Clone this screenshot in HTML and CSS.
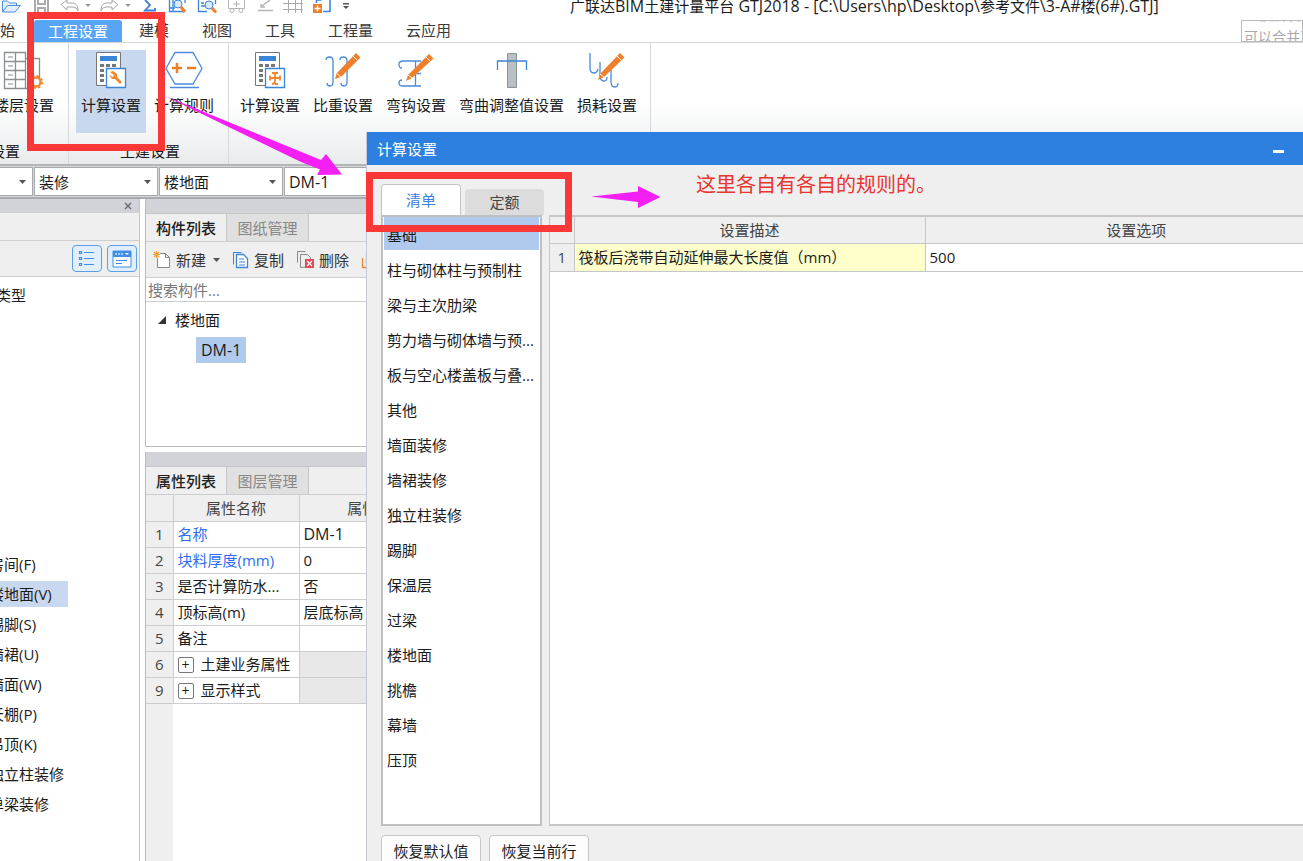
FILE: index.html
```html
<!DOCTYPE html>
<html lang="zh-CN">
<head>
<meta charset="utf-8">
<title>广联达BIM土建计量平台 GTJ2018</title>
<link rel="stylesheet" href="styles.css">
</head>
<body>
<div class="app">
  <header class="titlebar">
    <div class="quick">
      <button aria-label="打开"><svg width="34" height="19" viewBox="0 0 34 19"><path d="M2.500 12V1h5l2 2h7v2M2.500 12l5-6.500h13L15 12z" fill="#e4effb" stroke="#4a8ede"/></svg></button>
      <button aria-label="保存"><svg width="26" height="19" viewBox="34 0 26 19"><path d="M35 0v13h13V0M38 13V8h7v5M38 0v4h7V0" fill="none" stroke="#aaa" stroke-width="2"/></svg></button>
      <button aria-label="撤销"><svg width="24" height="19" viewBox="60 0 24 19"><path d="M61 4.500L67 0v3h5c5 0 6 4 6 8-1-3-3-4-6-4h-5v3z" fill="#fff" stroke="#a5a5a5"/></svg></button>
      <button aria-label="撤销列表"><svg width="14" height="19" viewBox="84 0 14 19"><path d="M85 4h6l-3 3z" fill="#999"/></svg></button>
      <button aria-label="重做"><svg width="24" height="19" viewBox="98 0 24 19"><path d="M118 4.500L112 0v3h-5c-5 0-6 4-6 8 1-3 3-4 6-4h5v3z" fill="#fff" stroke="#a5a5a5"/></svg></button>
      <button aria-label="重做列表"><svg width="20" height="19" viewBox="122 0 20 19"><path d="M125 4h6l-3 3z" fill="#999"/></svg></button>
      <button aria-label="汇总"><svg width="24" height="19" viewBox="142 0 24 19"><path d="M145 0l5 5-5 5.500h10V8" fill="none" stroke="#3d7fd0" stroke-width="1.800"/></svg></button>
      <button aria-label="查看"><svg width="30" height="19" viewBox="166 0 30 19"><path d="M169.500 0v11.500H184M169 8h6M173 0v11M185 0v3" fill="none" stroke="#3d85dc" stroke-width="1.300"/><circle cx="178" cy="4" r="4" fill="#d9eafb" stroke="#3d85dc"/><path d="M181 7l4 5" stroke="#f08030" stroke-width="3"/></svg></button>
      <button aria-label="查找"><svg width="30" height="19" viewBox="196 0 30 19"><path d="M215.500 0v4M198.500 0v11.500H207M201 3h3M201 6h4" fill="none" stroke="#3d85dc" stroke-width="1.300"/><circle cx="209" cy="5" r="4" fill="#d9eafb" stroke="#3d85dc"/><path d="M212 8l4 4.500" stroke="#f08030" stroke-width="3"/></svg></button>
      <button aria-label="添加"><svg width="30" height="19" viewBox="226 0 30 19"><path d="M228.500 0v8.500h16V0M236.500 1v6M233 4h7" fill="none" stroke="#b5b5b5"/><circle cx="232" cy="10.500" r="2" fill="#fff" stroke="#b5b5b5"/><circle cx="241" cy="10.500" r="2" fill="#fff" stroke="#b5b5b5"/></svg></button>
      <button aria-label="编辑"><svg width="26" height="19" viewBox="256 0 26 19"><path d="M258 10.500h15M262 6l8-6M261 4v3h4" fill="none" stroke="#b5b5b5" stroke-width="1.500"/></svg></button>
      <button aria-label="表格"><svg width="30" height="19" viewBox="282 0 30 19"><path d="M283 3.500h20M283 9.500h20M288.500 0v13M295.500 0v13M301.500 0v13" fill="none" stroke="#aaa"/></svg></button>
      <button aria-label="新窗口"><svg width="30" height="19" viewBox="312 0 30 19"><path d="M323 11.500h7V0M316.500 3V0h5" fill="none" stroke="#3d85dc" stroke-width="1.600"/><path d="M313 4h9v9h-9z" fill="#ee7d2b"/><path d="M317.500 5.500v6M314.500 8.500h6" stroke="#fff" stroke-width="1.500"/></svg></button>
      <button aria-label="自定义"><svg width="14" height="19" viewBox="342 0 14 19"><path d="M343 3h6v1.500h-6zM343 6h6l-3 3z" fill="#555"/></svg></button>
    </div>
    <h1>广联达<span class="latin">BIM</span>土建计量平台<span class="latin"> GTJ2018 - [C:\Users\hp\Desktop\</span>参考文件<span class="latin">\3-A#</span>楼<span class="latin">(6#).GTJ]</span></h1>
  </header>

  <nav class="menu">
    <button class="start">开始</button>
    <button class="active">工程设置</button>
    <button>建模</button>
    <button>视图</button>
    <button>工具</button>
    <button>工程量</button>
    <button>云应用</button>
    <div class="notice"><p>主楼层块<br>可以合并了</p></div>
  </nav>

  <section class="ribbon">
    <div class="group first">
      <div class="tools">
        <button><svg width="50" height="40" viewBox="0 50 50 40"><path d="M5.500 52.500h21v36h-21zM5.500 61.500h21M5.500 70.500h21M5.500 79.500h21M16.500 52.500v36M26.500 58.500h14v20M26.500 88.500h5" fill="none" stroke="#8a8f94" stroke-width="1.300"/><path d="M9 57h5M9 66h5M9 75h5M9 84h5" stroke="#888"/><circle cx="37" cy="82" r="4.500" fill="#fff" stroke="#ee8a35" stroke-width="2.500"/><circle cx="37" cy="82" r="6" fill="none" stroke="#ee8a35" stroke-width="2" stroke-dasharray="2.400 2.300"/></svg><span>楼层设置</span></button>
      </div>
      <h2>设置</h2>
    </div>
    <div class="group second">
      <div class="tools">
        <button class="pressed"><svg width="34" height="40" viewBox="94 50 34 40"><path d="M96.500 52.500h24v33h-24z" fill="#fff" stroke="#777"/><path d="M100 56h17v5h-17z" fill="#3c84d6"/><path d="M100 65.500h17M100 70.500h17M100 75.500h17M100 80.500h17" stroke="#777" stroke-width="3" stroke-dasharray="4 2"/><path d="M106.500 68.500h19v19h-19z" fill="#fff" stroke="#3c84d6" stroke-width="1.300"/><path d="M110 72l3-1 4 3v3l5 5-2 2-5-5h-3l-3-4 4 2 1-2z" fill="#f0872f"/></svg><span>计算设置</span></button>
        <button><svg width="38" height="40" viewBox="165 50 38 40"><path d="M175 52.500h18l9 16-9 15.500h-18l-9-15.500zM170 87.500h29" fill="none" stroke="#4a8bdc" stroke-width="1.300"/><path d="M172 68h10M177 63v10M187 68h9" stroke="#f07e26" stroke-width="2.500"/></svg><span>计算规则</span></button>
      </div>
      <h2>土建设置</h2>
    </div>
    <div class="group third">
      <div class="tools">
        <button><svg width="34" height="40" viewBox="254 50 34 40"><path d="M256.500 52.500h24v33h-24z" fill="#fff" stroke="#777"/><path d="M260 56h17v5h-17z" fill="#3c84d6"/><path d="M260 65.500h17M260 70.500h17M260 75.500h17M260 80.500h17" stroke="#777" stroke-width="3" stroke-dasharray="4 2"/><path d="M266.500 68.500h19v19h-19z" fill="#fff" stroke="#3c84d6" stroke-width="1.300"/><path d="M271 78h10M271 75.500v5M281 75.500v5M276 73v8q0 3-3 3M273 73h6M276 84h3" fill="none" stroke="#f0872f" stroke-width="1.800"/></svg><span>计算设置</span></button>
        <button><svg width="38" height="40" viewBox="324 50 38 40"><path d="M326 60q0-3 3.500-3t3.500 4v21q0 4-3 4t-3-3M340 60q0-3 3.500-3t3.500 4v21q0 4-3 4t-3-3" fill="none" stroke="#4a8bdc" stroke-width="1.300"/><path d="M335 79l1.500-5.500L356 53l4.500 4.500L341 77z" fill="#ef7f2b"/><path d="M353 56l4.500 4.500M336.500 73.500L341 77" stroke="#fff"/></svg><span>比重设置</span></button>
        <button><svg width="38" height="40" viewBox="397 50 38 40"><path d="M402 68q-3 0-3-3.500t4-3.500h18M402 80q-3 0-3 3t4 3h18M415.500 61v25M411 73.500h10" fill="none" stroke="#4a8bdc" stroke-width="1.300"/><path d="M406 81l2-6L429 54l4.500 4.500L412 78z" fill="#ef7f2b"/><path d="M426 57l4.500 4.500M408 75l4 3" stroke="#fff"/></svg><span>弯钩设置</span></button>
        <button><svg width="34" height="40" viewBox="494 50 34 40"><path d="M506.500 53.500h9v34h-9z" fill="#b9c0c4" stroke="#8c9397"/><path d="M496.500 70v-9h29v9" fill="none" stroke="#3c84d6" stroke-width="1.300"/></svg><span>弯曲调整值设置</span></button>
        <button><svg width="38" height="40" viewBox="587 50 38 40"><path d="M589 53v15q0 5 4 5 3 0 4-4M599 62v13q0 6 4 6 3 0 3-4M610 70v12q0 5 4 5 3 0 3-4" fill="none" stroke="#4a8bdc" stroke-width="1.300"/><path d="M597 80l2-6L619 53l4.500 4.500L603 77z" fill="#ef7f2b"/><path d="M616 56l4.500 4.500M599 74l4 3" stroke="#fff"/></svg><span>损耗设置</span></button>
      </div>
    </div>
  </section>

  <div class="selectors">
    <label><select aria-label="楼层"><option></option></select><svg width="7" height="4" viewBox="0 0 7 4"><path d="M0 0h7L3.500 4z"/></svg></label>
    <label><select aria-label="类别"><option>装修</option></select><svg width="7" height="4" viewBox="0 0 7 4"><path d="M0 0h7L3.500 4z"/></svg></label>
    <label><select aria-label="构件类型"><option>楼地面</option></select><svg width="7" height="4" viewBox="0 0 7 4"><path d="M0 0h7L3.500 4z"/></svg></label>
    <label><select class="latin" aria-label="构件"><option>DM-1</option></select></label>
  </div>

  <main class="workspace">
    <aside class="nav-panel">
      <div class="dock"><button aria-label="关闭"><svg width="8" height="8" viewBox="0 0 8 8"><path d="M1 1l6 6M7 1L1 7" stroke="#666" stroke-width="1.400"/></svg></button></div>
      <div class="nav-head"></div>
      <div class="nav-views">
        <button aria-label="列表"><svg width="18" height="18" viewBox="0 0 18 18"><path d="M1.500 1.500h2v2h-2zM1.500 7.500h2v2h-2zM1.500 13.500h2v2h-2zM6 2.500h10M6 8.500h10M6 14.500h10" fill="none" stroke="#3f8fe8" stroke-width="1.200"/></svg></button>
        <button aria-label="窗口"><svg width="20" height="18" viewBox="0 0 20 18"><path d="M1 1h18v16H1z" fill="#fff" stroke="#3f8fe8"/><path d="M1 1h18v6H1z" fill="#3f8fe8"/><path d="M4 3v2M7 3v2M10 3v2" stroke="#fff"/><path d="M13 3h4l-2 2z" fill="#fff"/><path d="M4 10.500h11M4 13.500h6" stroke="#3f8fe8"/></svg></button>
      </div>
      <div class="nav-list">
        <h3>类型</h3>
        <ul>
          <li>房间(F)</li>
          <li class="selected">楼地面(V)</li>
          <li>踢脚(S)</li>
          <li>墙裙(U)</li>
          <li>墙面(W)</li>
          <li>天棚(P)</li>
          <li>吊顶(K)</li>
          <li>独立柱装修</li>
          <li>单梁装修</li>
        </ul>
      </div>
    </aside>

    <div class="docks">
      <section class="components">
        <div class="dock"></div>
        <div class="tabs"><button class="current">构件列表</button><button>图纸管理</button></div>
        <div class="toolbar">
          <button><svg width="19" height="20" viewBox="0 0 19 20"><path d="M4.500 3.500h8l4 4v10h-12zM12.500 3.500v4h4" fill="#fff" stroke="#888"/><path d="M0 1h7v7H0z" fill="#efefef"/><path d="M3.500 1v7M0 4.500h7M1 2l5 5M6 2L1 7" stroke="#f0a040" stroke-width="1.200"/></svg>新建<svg class="caret" width="7" height="4" viewBox="0 0 7 4"><path d="M0 0h7L3.500 4z"/></svg></button>
          <button><svg width="18" height="20" viewBox="0 0 18 20"><path d="M1.500 14.500v-12h8" fill="none" stroke="#3c84d6"/><path d="M4.500 4.500h7l4 4v9h-11z" fill="#fff" stroke="#3c84d6" stroke-width="1.300"/><path d="M7 9h5M7 12h6M7 15h6" stroke="#3c84d6"/></svg>复制</button>
          <button><svg width="19" height="20" viewBox="0 0 19 20"><path d="M1.500 12.500v-11h8M4.500 17.500v-13h7l3 3v9z" fill="none" stroke="#888"/><path d="M9 9h9v9H9z" fill="#dc4a55"/><path d="M11 11l5 5M16 11l-5 5" stroke="#fff" stroke-width="1.300"/></svg>删除</button>
          <button aria-label="层间复制"><svg width="16" height="20" viewBox="0 0 16 20"><path d="M1.500 8v9.500h12V8M5.500 14V4h8" fill="none" stroke="#ee8a35" stroke-width="1.300"/></svg></button>
        </div>
        <input class="search" type="text" placeholder="搜索构件..." aria-label="搜索构件">
        <div class="tree">
          <div class="node"><svg width="8" height="8" viewBox="0 0 8 8"><path d="M8 0v8H0z" fill="#333"/></svg>楼地面</div>
          <div class="leaf"><span class="latin">DM-1</span></div>
        </div>
      </section>
      <section class="properties">
        <div class="dock"></div>
        <div class="tabs"><button class="current">属性列表</button><button>图层管理</button></div>
        <div class="prop-body">
          <table>
            <thead><tr><th class="idx"></th><th class="name">属性名称</th><th class="val">属性值</th></tr></thead>
            <tbody>
              <tr><th>1</th><td class="key">名称</td><td class="latin">DM-1</td></tr>
              <tr><th>2</th><td class="key">块料厚度(mm)</td><td>0</td></tr>
              <tr><th>3</th><td>是否计算防水...</td><td>否</td></tr>
              <tr><th>4</th><td>顶标高(m)</td><td>层底标高</td></tr>
              <tr><th>5</th><td>备注</td><td></td></tr>
              <tr><th>6</th><td><button class="expand" aria-label="展开">+</button>土建业务属性</td><td class="off"></td></tr>
              <tr><th>9</th><td><button class="expand" aria-label="展开">+</button>显示样式</td><td class="off"></td></tr>
            </tbody>
          </table>
          <div class="gutter"></div>
        </div>
      </section>
    </div>
  </main>
</div>

<div class="dialog" role="dialog" aria-labelledby="dlg-title">
  <div class="dlg-title"><h2 id="dlg-title">计算设置</h2><button aria-label="最小化"><svg width="11" height="3" viewBox="0 0 11 3"><path d="M0 0h11v3H0z" fill="#fff"/></svg></button></div>
  <div class="dlg-tabs"><button class="current">清单</button><button>定额</button></div>
  <div class="dlg-main">
    <ul class="categories">
      <li class="selected">基础</li>
      <li>柱与砌体柱与预制柱</li>
      <li>梁与主次肋梁</li>
      <li>剪力墙与砌体墙与预...</li>
      <li>板与空心楼盖板与叠...</li>
      <li>其他</li>
      <li>墙面装修</li>
      <li>墙裙装修</li>
      <li>独立柱装修</li>
      <li>踢脚</li>
      <li>保温层</li>
      <li>过梁</li>
      <li>楼地面</li>
      <li>挑檐</li>
      <li>幕墙</li>
      <li>压顶</li>
    </ul>
    <div class="settings">
      <table>
        <thead><tr><th class="num"></th><th class="desc">设置描述</th><th class="opt">设置选项</th></tr></thead>
        <tbody><tr><th>1</th><td class="hint">筏板后浇带自动延伸最大长度值（mm）</td><td>500</td></tr></tbody>
      </table>
    </div>
  </div>
  <div class="dlg-foot"><button>恢复默认值</button><button>恢复当前行</button></div>
</div>

<div class="mark mark-ribbon"></div>
<div class="mark mark-tabs"></div>
<svg class="arrow arrow-ribbon" width="180" height="84" viewBox="164 94 180 84"><path d="M164 95.500L321 160l5-6 16 20.500-25 .5 3-5.500-20-8z" fill="#f31ff3"/></svg>
<svg class="arrow arrow-tabs" width="72" height="24" viewBox="590 185 72 24"><path d="M591 196.500l47-5v-5.500l22.500 11-22.500 11v-6z" fill="#f31ff3"/></svg>
<p class="note">这里各自有各自的规则的。</p>
</body>
</html>
```

FILE: styles.css
```css
* { box-sizing: border-box; }
html, body { height: 100%; margin: 0; }
body {
  position: relative;
  overflow: hidden;
  background: #fff;
  color: #1c1c1c;
  font: 15px/20px "Open Sans", "Noto Sans CJK SC", sans-serif;
}
h1, h2, h3, p, ul { margin: 0; padding: 0; font-size: 15px; font-weight: 400; list-style: none; }
button, input, select { margin: 0; padding: 0; border: 0; background: none; color: inherit; font: inherit; white-space: nowrap; }
svg { display: block; flex: none; }
table { border-collapse: collapse; table-layout: fixed; }
th { font-weight: 400; color: #444; }
.latin { font-size: 16px; }

/* The window runs off the left edge of the screen */
.app { display: flex; flex-direction: column; height: 100%; margin-left: -16px; }

.titlebar { display: flex; height: 19px; flex: none; }
.quick { display: flex; width: 570px; padding-left: 16px; }
.titlebar h1 { margin-left: 16px; line-height: 12px; white-space: nowrap; }

.menu { display: flex; flex: none; gap: 1px; height: 24px; border-bottom: 1px solid #d5d7d9; color: #3a3a3a; }
.menu button { padding: 0 16px; line-height: 23px; }
.menu .start { width: 49px; padding: 0 1px; text-align: left; }
.menu .active { padding: 0 14px; margin-top: 1px; border-radius: 3px 3px 0 0; background: #58a5f5; color: #fff; line-height: 21px; }
.notice { width: 62px; height: 22px; margin: 1px 0 0 auto; overflow: hidden; border: 1px solid #bbb; color: #aaa; }
.notice p { margin: -17px 0 0 2px; font-size: 14px; line-height: 22px; white-space: nowrap; }

.ribbon { display: flex; flex: none; height: 123px; border-bottom: 2px solid #b3b5b9; background: linear-gradient(#fff 50%, #e8ebec); }
.group { display: flex; flex-direction: column; padding-top: 7px; border-right: 1px solid #d6d9dc; }
.tools { display: flex; gap: 3px; }
.tools button { display: flex; flex-direction: column; align-items: center; height: 83px; padding: 0 5px; }
.tools span { line-height: 30px; }
.tools .pressed { background: #c8d8ee; }
.group h2 { margin-top: 8px; text-align: center; }
.first { width: 85px; padding-left: 5px; }
.first h2 { text-align: left; padding-left: 1px; }
.second { width: 160px; padding-left: 7px; }
.second h2 { padding-right: 4px; }
.third { width: 422px; padding-left: 6px; }

.selectors { display: flex; flex: none; gap: 1px; height: 33px; padding: 1px 0; border-bottom: 2px solid #a8aaae; background: #d8d9dc; }
.selectors label { display: flex; align-items: center; width: 124px; padding-right: 6px; border: 1px solid #a5a7aa; background: #fff; }
.selectors label:first-child { width: 49px; }
.selectors select { flex: 1; min-width: 0; height: 28px; padding-left: 4px; appearance: none; outline: 0; }
.selectors .latin { font-size: 16px; }
.selectors path, .caret path { fill: #555; }

.workspace { display: flex; flex: 1; min-height: 0; }
.dock { display: flex; flex: none; align-items: center; justify-content: flex-end; height: 14px; padding-right: 7px; background: #d2d3d9; }
.nav-panel { display: flex; flex: none; flex-direction: column; width: 156px; border-right: 1px solid #c3c5c9; }
.nav-head { height: 28px; background: #efefef; border-bottom: 1px solid #cfcfcf; }
.nav-views { display: flex; justify-content: flex-end; gap: 5px; height: 36px; padding: 4px 2px; background: #efefef; border-bottom: 1px solid #cfcfcf; }
.nav-views button { display: flex; align-items: center; justify-content: center; width: 30px; height: 27px; border: 1px solid #5a9fe8; border-radius: 4px; background: #e1effc; }
.nav-list { flex: 1; padding: 8px 0 0 5px; }
.nav-list h3 { padding-left: 7px; }
.nav-list ul { display: flex; flex-direction: column; gap: 4px; margin-top: 246px; }
.nav-list li { width: 79px; line-height: 26px; white-space: nowrap; }
.nav-list .selected { background: #c8d8ee; }

.docks { display: flex; flex: none; flex-direction: column; width: 296px; margin-left: 5px; }
.components { display: flex; flex: none; flex-direction: column; height: 248px; border: 1px solid #b8babd; border-top: 0; }
.tabs { display: flex; flex: none; height: 29px; border-top: 1px solid #c4c6c9; border-bottom: 1px solid #cbcdd0; background: #efefef; }
.tabs button { width: 82px; border-right: 1px solid #c4c6c9; background: #e0e0e0; color: #888; }
.tabs .current { width: 81px; background: #efefef; color: #222; font-weight: 500; }
.toolbar { display: flex; flex: none; gap: 12px; height: 36px; padding-left: 7px; background: #efefef; border-bottom: 1px solid #cbcdd0; color: #333; }
.toolbar button { display: flex; align-items: center; gap: 4px; }
.toolbar .caret { margin-left: 3px; }
.search { flex: none; height: 24px; padding: 0 2px; border-bottom: 1px solid #cbcdd0; outline: 0; }
.search::placeholder { color: #777; opacity: 1; }
.tree { padding: 3px 0 0 12px; line-height: 30px; }
.node { display: flex; align-items: center; gap: 9px; }
.leaf { display: flex; align-items: center; height: 30px; padding-left: 38px; }
.leaf span { padding: 0 5px; background: #b0caee; line-height: 26px; }
.properties { display: flex; flex: 1; flex-direction: column; margin-top: 5px; border-left: 1px solid #b8babd; min-height: 0; }
.prop-body { display: flex; flex: 1; flex-direction: column; }
.prop-body table { width: 295px; }
.prop-body tr { height: 26px; }
.prop-body th, .prop-body td { padding: 0 4px; border-right: 1px solid #cbcdd0; border-bottom: 1px solid #cbcdd0; background: #fff; line-height: 20px; white-space: nowrap; }
.prop-body th { background: #efefef; }
.prop-body .idx { width: 27px; }
.prop-body .name { width: 126px; }
.prop-body .key { color: #2f6df0; }
.prop-body .off { background: #e8e8e8; }
.expand { width: 16px; height: 16px; margin-right: 7px; border: 1px solid #777; border-radius: 2px; font-size: 14px; line-height: 12px; }
.gutter { flex: 1; width: 27px; background: #efefef; }

/* Calculation settings dialog */
.dialog { position: absolute; inset: 132px 0 0 366px; display: flex; flex-direction: column; overflow: hidden; border-left: 1px solid #c3c8d4; background: #efefef; }
.dlg-title { display: flex; flex: none; align-items: center; justify-content: space-between; height: 33px; margin-left: -1px; padding: 0 19px 0 11px; background: #2d7fe0; color: #fff; }
.dlg-title button { padding-top: 6px; }
.dlg-tabs { display: flex; flex: none; align-items: flex-end; gap: 4px; height: 50px; padding-left: 14px; }
.dlg-tabs button { width: 79px; height: 26px; border-radius: 4px 4px 0 0; background: #dcdcdc; color: #444; }
.dlg-tabs .current { width: 80px; height: 31px; border: 1px solid #c4c4c4; border-bottom: 0; background: #fff; color: #3b82e0; }
.dlg-main { display: flex; flex: 1; gap: 7px; min-height: 0; padding-left: 14px; }
.categories { flex: none; width: 161px; border: 2px solid #bfc0c2; background: #fff; overflow: hidden; }
.categories li { height: 35px; padding-left: 4px; line-height: 36px; white-space: nowrap; border-bottom: 2px solid #fff; }
.categories .selected { margin: 0 1px; padding-left: 3px; background: #b0caee; }
.settings { flex: 1; overflow: hidden; border: 2px solid #c6c6c6; border-width: 2px 0 2px 1px; background: #fff; }
.settings table { width: 798px; }
.settings th, .settings td { height: 28px; padding: 0 4px; border-right: 1px solid #c4c6c9; border-bottom: 1px solid #c4c6c9; white-space: nowrap; }
.settings thead th { height: 26px; }
.settings th { background: #efefef; }
.settings .num { width: 24px; }
.settings .desc { width: 351px; }
.settings .hint { background: #ffffcb; }
.dlg-foot { display: flex; flex: none; gap: 8px; height: 35px; padding: 9px 0 0 14px; }
.dlg-foot button { flex: none; width: 100px; height: 32px; border: 1px solid #c6c6c6; border-radius: 4px; background: #fdfdfd; }

/* Callouts drawn over the window */
.mark { position: absolute; border: 7px solid #fb3838; }
.mark-ribbon { left: 27px; top: 12px; width: 138px; height: 139px; }
.mark-tabs { left: 366px; top: 172px; width: 206px; height: 60px; }
.arrow { position: absolute; }
.arrow-ribbon { left: 164px; top: 94px; }
.arrow-tabs { left: 590px; top: 185px; }
.note { position: absolute; left: 696px; top: 171px; color: #e8352e; font-size: 20px; line-height: 28px; white-space: nowrap; }
```
